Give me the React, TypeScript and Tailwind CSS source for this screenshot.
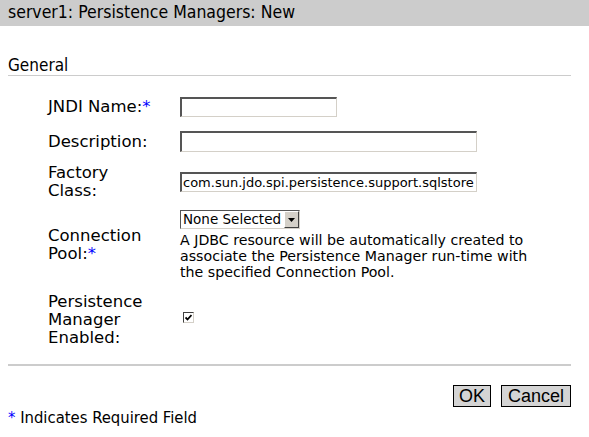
import React from "react";

const Star = () => <span className="text-[#0000ff]">*</span>;

export default function App() {
  return (
    <div className="w-[589px] h-[437px] bg-white text-black overflow-hidden font-['DejaVu_Sans',sans-serif]">
      <div className="h-[26px] bg-[#cccccc] pl-[8px] flex items-center font-['DejaVu_Sans_Condensed','DejaVu_Sans',sans-serif] text-[17.5px] leading-none">
        server1: Persistence Managers: New
      </div>
      <div className="px-[8px] pt-[30px] w-[579px]">
        <div className="font-['DejaVu_Sans_Condensed','DejaVu_Sans',sans-serif] text-[17px] leading-[18px] border-b border-[#cccccc] pb-[1px]">
          General
        </div>
      </div>
      <div className="pl-[48px] pt-[21px] flex flex-col text-[16.5px] leading-[18px]">
        <div className="flex items-center h-[20px]">
          <div className="w-[132px]">
            JNDI Name:<Star />
          </div>
          <input className="w-[157px] h-[20px] border-t-2 border-l-2 border-[#555] border-b border-r border-b-[#d4d0c8] border-r-[#d4d0c8] outline-none" />
        </div>
        <div className="flex items-center h-[21px] mt-[14px]">
          <div className="w-[132px]">Description:</div>
          <input className="w-[297px] h-[21px] border-t-2 border-l-2 border-[#555] border-b border-r border-b-[#d4d0c8] border-r-[#d4d0c8] outline-none" />
        </div>
        <div className="flex items-center h-[36px] mt-[12px]">
          <div className="w-[132px]">
            Factory
            <br />
            Class:
          </div>
          <div className="w-[297px] h-[20px] border-t-2 border-l-2 border-[#555] border-b border-r border-b-[#d4d0c8] border-r-[#d4d0c8] overflow-hidden whitespace-nowrap text-[13px] leading-[17px] pl-[1px]">
            com.sun.jdo.spi.persistence.support.sqlstore
          </div>
        </div>
        <div className="flex items-center mt-[10px]">
          <div className="w-[132px]">
            Connection
            <br />
            Pool:<Star />
          </div>
          <div className="flex flex-col">
            <div className="w-[120px] h-[19px] flex border-t border-l border-[#555] border-b border-r border-b-[#d4d0c8] border-r-[#d4d0c8] text-[13.5px] leading-[17px]">
              <div className="flex-1 pl-[2px] whitespace-nowrap">None Selected</div>
              <div className="w-[15px] h-[17px] bg-[#d4d0c8] border-t border-l border-white border-b border-r border-b-[#404040] border-r-[#404040] flex items-center justify-center">
                <svg width="7" height="4" viewBox="0 0 7 4">
                  <path d="M0 0H7L3.5 4Z" fill="#000" />
                </svg>
              </div>
            </div>
            <div className="text-[14.2px] leading-[16px] mt-[3px] whitespace-nowrap">
              A JDBC resource will be automatically created to
              <br />
              associate the Persistence Manager run-time with
              <br />
              the specified Connection Pool.
            </div>
          </div>
        </div>
        <div className="flex items-center mt-[13px]">
          <div className="w-[132px]">
            Persistence
            <br />
            Manager
            <br />
            Enabled:
          </div>
          <div className="ml-[3px] mt-[-5px] w-[11px] h-[11px] border-t border-l border-[#404040] border-b border-r border-b-[#d4d0c8] border-r-[#d4d0c8] bg-white flex items-center justify-center">
            <svg width="7" height="7" viewBox="0 0 7 7">
              <path d="M0.5 3.5L2.5 5.5L6.5 1" stroke="#000" strokeWidth="1.8" fill="none" />
            </svg>
          </div>
        </div>
      </div>
      <div className="px-[8px] w-[579px] mt-[17px]">
        <div className="h-[2px] bg-[#cccccc]" />
      </div>
      <div className="w-[571px] flex justify-end gap-[10px] mt-[19px] font-['Liberation_Sans',sans-serif] text-[18px] leading-none">
        <button className="h-[22px] px-[5px] bg-[#d4d4d4] border border-black">OK</button>
        <button className="h-[22px] px-[6px] bg-[#d4d4d4] border border-black">Cancel</button>
      </div>
      <div className="pl-[8px] mt-[2px] font-['DejaVu_Sans_Condensed','DejaVu_Sans',sans-serif] text-[16.5px] leading-[18px]">
        <Star /> Indicates Required Field
      </div>
    </div>
  );
}
